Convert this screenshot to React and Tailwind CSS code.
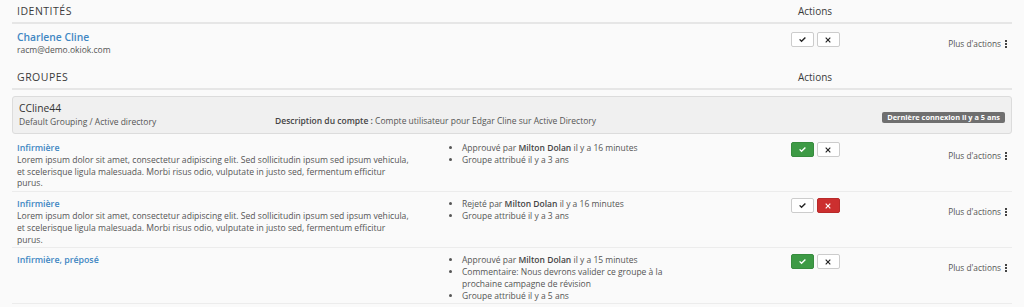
import React from 'react';

const Check = ({ className }) => (
  <svg viewBox="0 0 16 16" className={className} fill="currentColor">
    <path d="M2 8.6l1.7-1.7 2.6 2.6 6-6 1.7 1.7-7.7 7.7z" />
  </svg>
);

const Cross = ({ className }) => (
  <svg viewBox="0 0 16 16" className={className} fill="currentColor">
    <path d="M4.2 2.6L8 6.4l3.8-3.8 1.6 1.6L9.6 8l3.8 3.8-1.6 1.6L8 9.6l-3.8 3.8-1.6-1.6L6.4 8 2.6 4.2z" />
  </svg>
);

const Kebab = () => (
  <span className="inline-flex flex-col gap-[1px] ml-[4px] align-middle">
    <span className="w-[2px] h-[2px] bg-[#444]" />
    <span className="w-[2px] h-[2px] bg-[#444]" />
    <span className="w-[2px] h-[2px] bg-[#444]" />
  </span>
);

function ActionButtons({ state }) {
  const okCls =
    state === 'approved'
      ? 'bg-[#3d9a45] border-[#378c3e] text-white'
      : 'bg-white border-[#ccc] text-[#222]';
  const noCls =
    state === 'rejected'
      ? 'bg-[#cc2f2f] border-[#b82a2a] text-white'
      : 'bg-white border-[#ccc] text-[#222]';
  return (
    <div className="flex justify-center gap-[3px]">
      <button className={`w-[23px] h-[15px] border rounded-[2px] flex items-center justify-center ${okCls}`}>
        <Check className="w-[9px] h-[9px]" />
      </button>
      <button className={`w-[23px] h-[15px] border rounded-[2px] flex items-center justify-center ${noCls}`}>
        <Cross className="w-[8px] h-[8px]" />
      </button>
    </div>
  );
}

const MoreActions = () => (
  <div className="flex items-center justify-end pr-[5px] text-[8.3px] text-[#555]">
    Plus d'actions
    <Kebab />
  </div>
);

const lorem =
  'Lorem ipsum dolor sit amet, consectetur adipiscing elit. Sed sollicitudin ipsum sed ipsum vehicula, et scelerisque ligula malesuada. Morbi risus odio, vulputate in justo sed, fermentum efficitur purus.';

const groups = [
  {
    name: 'Infirmière',
    desc: lorem,
    state: 'approved',
    items: [
      <>Approuvé par <b className="font-semibold text-[#444]">Milton Dolan</b> il y a 16 minutes</>,
      <>Groupe attribué il y a 3 ans</>,
    ],
  },
  {
    name: 'Infirmière',
    desc: lorem,
    state: 'rejected',
    items: [
      <>Rejeté par <b className="font-semibold text-[#444]">Milton Dolan</b> il y a 16 minutes</>,
      <>Groupe attribué il y a 3 ans</>,
    ],
  },
  {
    name: 'Infirmière, préposé',
    desc: null,
    state: 'approved',
    items: [
      <>Approuvé par <b className="font-semibold text-[#444]">Milton Dolan</b> il y a 15 minutes</>,
      <>Commentaire: Nous devrons valider ce groupe à la prochaine campagne de révision</>,
      <>Groupe attribué il y a 5 ans</>,
    ],
  },
];

const cols = 'grid grid-cols-[428px_320px_110px_1fr]';

function SectionHeader({ title }) {
  return (
    <div className={`${cols} border-b-2 border-[#e6e6e6] h-[23px] items-center text-[10px]`}>
      <div className="pl-[5px] text-[10.5px] text-[#3a3a3a] font-medium tracking-[0.5px]">{title}</div>
      <div />
      <div className="text-center text-[#3a3a3a]">Actions</div>
      <div />
    </div>
  );
}

export default function App() {
  return (
    <div className="bg-[#fafafa] min-h-[307px] px-[12px] pt-[1px] font-['Open_Sans',sans-serif] text-[#555] overflow-hidden">
      <SectionHeader title="IDENTITÉS" />

      {/* Identity row */}
      <div className={`${cols} h-[43px] items-start`}>
        <div className="pl-[5px] pt-[6px]">
          <div className="text-[10.3px] font-semibold text-[#3f87c3] leading-[14px]">Charlene Cline</div>
          <div className="text-[8.5px] leading-[12px] text-[#555]">racm@demo.okiok.com</div>
        </div>
        <div />
        <div className="pt-[8px]">
          <ActionButtons state="none" />
        </div>
        <div className="pt-[14px]">
          <MoreActions />
        </div>
      </div>

      <SectionHeader title="GROUPES" />

      {/* Account box */}
      <div className="mt-[6px] bg-[#f0f0f0] border border-[#dcdcdc] rounded-[3px] h-[38px] px-[6px] flex items-start">
        <div className="w-[256px] pt-[4px]">
          <div className="text-[10.3px] text-[#333] leading-[14px]">CCline44</div>
          <div className="text-[8.5px] leading-[13px] text-[#555]">Default Grouping / Active directory</div>
        </div>
        <div className="pt-[17px] text-[8.5px] text-[#555] leading-[13px] flex-1">
          <span className="font-semibold text-[#444]">Description du compte :</span> Compte utilisateur pour Edgar Cline sur Active Directory
        </div>
        <div className="pt-[5px]">
          <span className="inline-block bg-[#6f6f6f] text-white text-[7.4px] font-bold leading-[11px] px-[5px] rounded-[2px]">
            Dernière connexion il y a 5 ans
          </span>
        </div>
      </div>

      {/* Group rows */}
      <div className="mt-[2px]">
        {groups.map((g, i) => (
          <div
            key={i}
            className={`${cols} border-b border-[#ececec] pt-[6px] pb-[1px] ${g.desc ? '' : 'min-h-[56px]'}`}
          >
            <div className="pl-[5px]">
              <div className="text-[8.8px] font-semibold text-[#3f87c3] leading-[13px]">{g.name}</div>
              {g.desc && <div className="w-[392px] text-[8.6px] leading-[11.7px] text-[#555]">{g.desc}</div>}
            </div>
            <ul className="list-disc pl-[22px] text-[8.5px] leading-[12px] text-[#555] pr-[62px]">
              {g.items.map((it, j) => (
                <li key={j}>{it}</li>
              ))}
            </ul>
            <div>
              <ActionButtons state={g.state} />
            </div>
            <div className="pt-[8px]">
              <MoreActions />
            </div>
          </div>
        ))}
      </div>
    </div>
  );
}
